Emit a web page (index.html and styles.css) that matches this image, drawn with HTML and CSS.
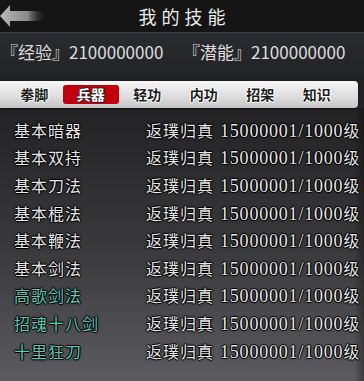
FILE: index.html
```html
<!DOCTYPE html>
<html lang="zh">
<head>
    <meta charset="UTF-8">
    <meta name="viewport" content="width=device-width, initial-scale=1.0">
    <title>我的技能</title>
    <link rel="stylesheet" href="styles.css">
</head>
<body>
    <div class="screen">
        <div class="header">
            <svg class="back" width="46" height="26" viewBox="0 0 46 26">
                <defs>
                    <linearGradient id="arrowGrad" x1="0" x2="1" y1="0" y2="0">
                        <stop offset="0" stop-color="#b8b8b8"/>
                        <stop offset="0.6" stop-color="#8a8a8a"/>
                        <stop offset="1" stop-color="#2a2a2a" stop-opacity="0"/>
                    </linearGradient>
                </defs>
                <path d="M0 13 L10 2 L10 8 L46 8 L46 18 L10 18 L10 24 Z" fill="url(#arrowGrad)"/>
            </svg>
            <div class="title">我的技能</div>
        </div>

        <div class="stats">
            <div class="stat">『经验』2100000000</div>
            <div class="stat">『潜能』2100000000</div>
        </div>

        <div class="tabs">
            <span class="tab">拳脚</span>
            <span class="tab active">兵器</span>
            <span class="tab">轻功</span>
            <span class="tab">内功</span>
            <span class="tab">招架</span>
            <span class="tab">知识</span>
        </div>

        <div class="skill-list" id="skill-list"></div>
    </div>

    <script>
        const skills = [
            { name: '基本暗器', special: false },
            { name: '基本双持', special: false },
            { name: '基本刀法', special: false },
            { name: '基本棍法', special: false },
            { name: '基本鞭法', special: false },
            { name: '基本剑法', special: false },
            { name: '高歌剑法', special: true },
            { name: '招魂十八剑', special: true },
            { name: '十里狂刀', special: true }
        ];

        const list = document.getElementById('skill-list');
        skills.forEach(skill => {
            const row = document.createElement('div');
            row.classList.add('skill-row');

            const name = document.createElement('span');
            name.classList.add('skill-name');
            if (skill.special) name.classList.add('special');
            name.textContent = skill.name;
            row.appendChild(name);

            const rank = document.createElement('span');
            rank.classList.add('skill-rank');
            rank.textContent = '返璞归真';
            row.appendChild(rank);

            const level = document.createElement('span');
            level.classList.add('skill-level');
            level.innerHTML = '15000001/1000<span class="ji">级</span>';
            row.appendChild(level);

            list.appendChild(row);
        });
    </script>
</body>
</html>
```

FILE: styles.css
```css
body {
    margin: 0;
    padding: 0;
    overflow: hidden;
    background: #111;
    font-family: "Noto Sans CJK SC", sans-serif;
}

.screen {
    width: 364px;
    height: 381px;
    overflow: hidden;
    background: linear-gradient(to bottom, #1c1c1e 0px, #232325 110px, #3a3a3d 250px, #5c5c60 381px);
    position: relative;
}

.screen::after {
    content: "";
    position: absolute;
    top: 108px;
    right: 0;
    width: 10px;
    height: 273px;
    background: linear-gradient(to right, rgba(0, 0, 0, 0), rgba(0, 0, 0, 0.35));
}

.header {
    height: 32px;
    background: #151515;
    border-bottom: 1px solid #3b3f44;
    display: flex;
    align-items: center;
    justify-content: center;
    position: relative;
}

.back {
    position: absolute;
    left: 0;
    top: 3px;
}

.title {
    color: #ececec;
    font-size: 18px;
    letter-spacing: 5px;
    padding-left: 5px;
}

.stats {
    height: 46px;
    box-sizing: border-box;
    padding-bottom: 9px;
    display: flex;
    align-items: center;
    background: linear-gradient(to bottom, #2a2b2e, #222325);
    color: #dedede;
    font-size: 17px;
}

.stat {
    width: 182px;
    padding-left: 1px;
}

.tabs {
    margin-top: 2px;
    width: 358px;
    height: 27px;
    display: flex;
    align-items: center;
    background: linear-gradient(to bottom, #f6f6f6, #dcdcdc 60%, #c4c4c4);
    border-radius: 0 4px 4px 0;
    box-shadow: 0 1px 2px rgba(0, 0, 0, 0.6);
    padding-left: 6px;
    box-sizing: border-box;
}

.tab {
    width: 56.5px;
    text-align: center;
    font-size: 14px;
    font-weight: bold;
    color: #1c1c1c;
    line-height: 19px;
    text-shadow: 1px 0 0 #fff, -1px 0 0 #fff, 0 1px 0 #fff, 0 -1px 0 #fff;
}

.tab.active {
    background: #c0000c;
    border-radius: 3px;
    color: #fff;
    text-shadow: 1px 0 0 #222, -1px 0 0 #222, 0 1px 0 #222, 0 -1px 0 #222;
}

.skill-list {
    padding-top: 8px;
}

.skill-row {
    height: 27.6px;
    display: flex;
    align-items: center;
    color: #e6e6e6;
    text-shadow: 1px 0 0 #000, -1px 0 0 #000, 0 1px 0 #000, 0 -1px 0 #000, 0 0 3px #000;
}

.skill-name {
    width: 132px;
    padding-left: 14px;
    font-size: 16px;
    letter-spacing: 1px;
}

.skill-name.special {
    color: #5cc9b4;
}

.skill-rank {
    width: 74px;
    font-size: 16px;
    letter-spacing: 1px;
}

.skill-level {
    font-family: "Liberation Serif", serif;
    font-size: 18px;
    letter-spacing: 0.8px;
}

.ji {
    font-family: "Noto Sans CJK SC", sans-serif;
    font-size: 16px;
}
```
